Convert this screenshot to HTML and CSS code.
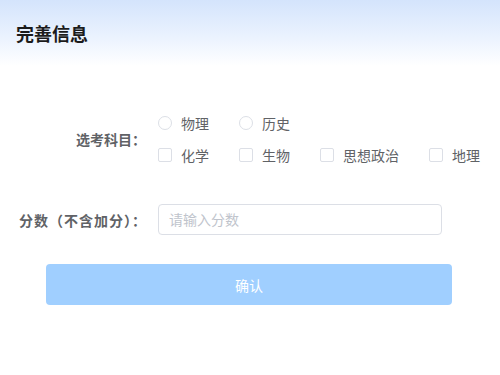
FILE: index.html
```html
<!DOCTYPE html>
<html lang="zh">
<head>
<meta charset="utf-8">
<link rel="stylesheet" href="styles.css">
</head>
<body>
<div class="header"><h1 class="title">完善信息</h1></div>
<div class="form">
  <div class="row subjects">
    <div class="label">选考科目：</div>
    <div class="field">
      <div class="line">
        <span class="opt"><span class="radio"></span><span class="txt">物理</span></span>
        <span class="opt"><span class="radio"></span><span class="txt">历史</span></span>
      </div>
      <div class="line">
        <span class="opt"><span class="check"></span><span class="txt">化学</span></span>
        <span class="opt"><span class="check"></span><span class="txt">生物</span></span>
        <span class="opt"><span class="check"></span><span class="txt">思想政治</span></span>
        <span class="opt"><span class="check"></span><span class="txt">地理</span></span>
      </div>
    </div>
  </div>
  <div class="row score">
    <div class="label">分数（不含加分）：</div>
    <div class="field"><div class="input">请输入分数</div></div>
  </div>
  <div class="actions"><div class="btn">确认</div></div>
</div>
</body>
</html>
```
FILE: styles.css
```css
* { box-sizing: border-box; }
html, body { margin: 0; padding: 0; background: #fff; }
body {
  width: 500px; height: 375px; overflow: hidden;
  font-family: "Noto Sans CJK SC", "Noto Sans", sans-serif;
  font-size: 14px; color: #606266;
}
.header {
  height: 66px;
  background: linear-gradient(to bottom, #d4e4fc 0%, #eaf2fe 55%, #ffffff 100%);
  padding: 20px 0 0 16px;
}
.title { margin: 0; font-size: 18px; line-height: 26px; font-weight: 700; color: #1b1b1b; }
.form { padding-top: 41px; }
.row { display: grid; grid-template-columns: 158px 342px; align-items: center; }
.label {
  text-align: right; padding-right: 12px; font-weight: 700; color: #606266;
  line-height: 20px; white-space: nowrap;
}
.score .label { letter-spacing: 1px; padding-right: 11px; }
.field { min-width: 0; }
.line { display: flex; align-items: center; height: 32px; white-space: nowrap; }
.opt { display: flex; align-items: center; margin-right: 30px; flex: none; }
.radio, .check {
  width: 14px; height: 14px; border: 1px solid #dcdfe6; background: #fff; flex: none;
}
.radio { border-radius: 50%; }
.check { border-radius: 2px; }
.txt { margin-left: 9px; line-height: 20px; color: #606266; }
.score { margin-top: 33px; }
.input {
  width: 284px; height: 31px; border: 1px solid #dcdfe6; border-radius: 4px;
  padding: 0 10px; line-height: 29px; color: #c0c4cc;
}
.actions { padding: 29px 48px 0 46px; }
.btn {
  height: 41px; border-radius: 4px; background: #a0cfff; color: #fff;
  display: flex; align-items: center; justify-content: center;
}
```
